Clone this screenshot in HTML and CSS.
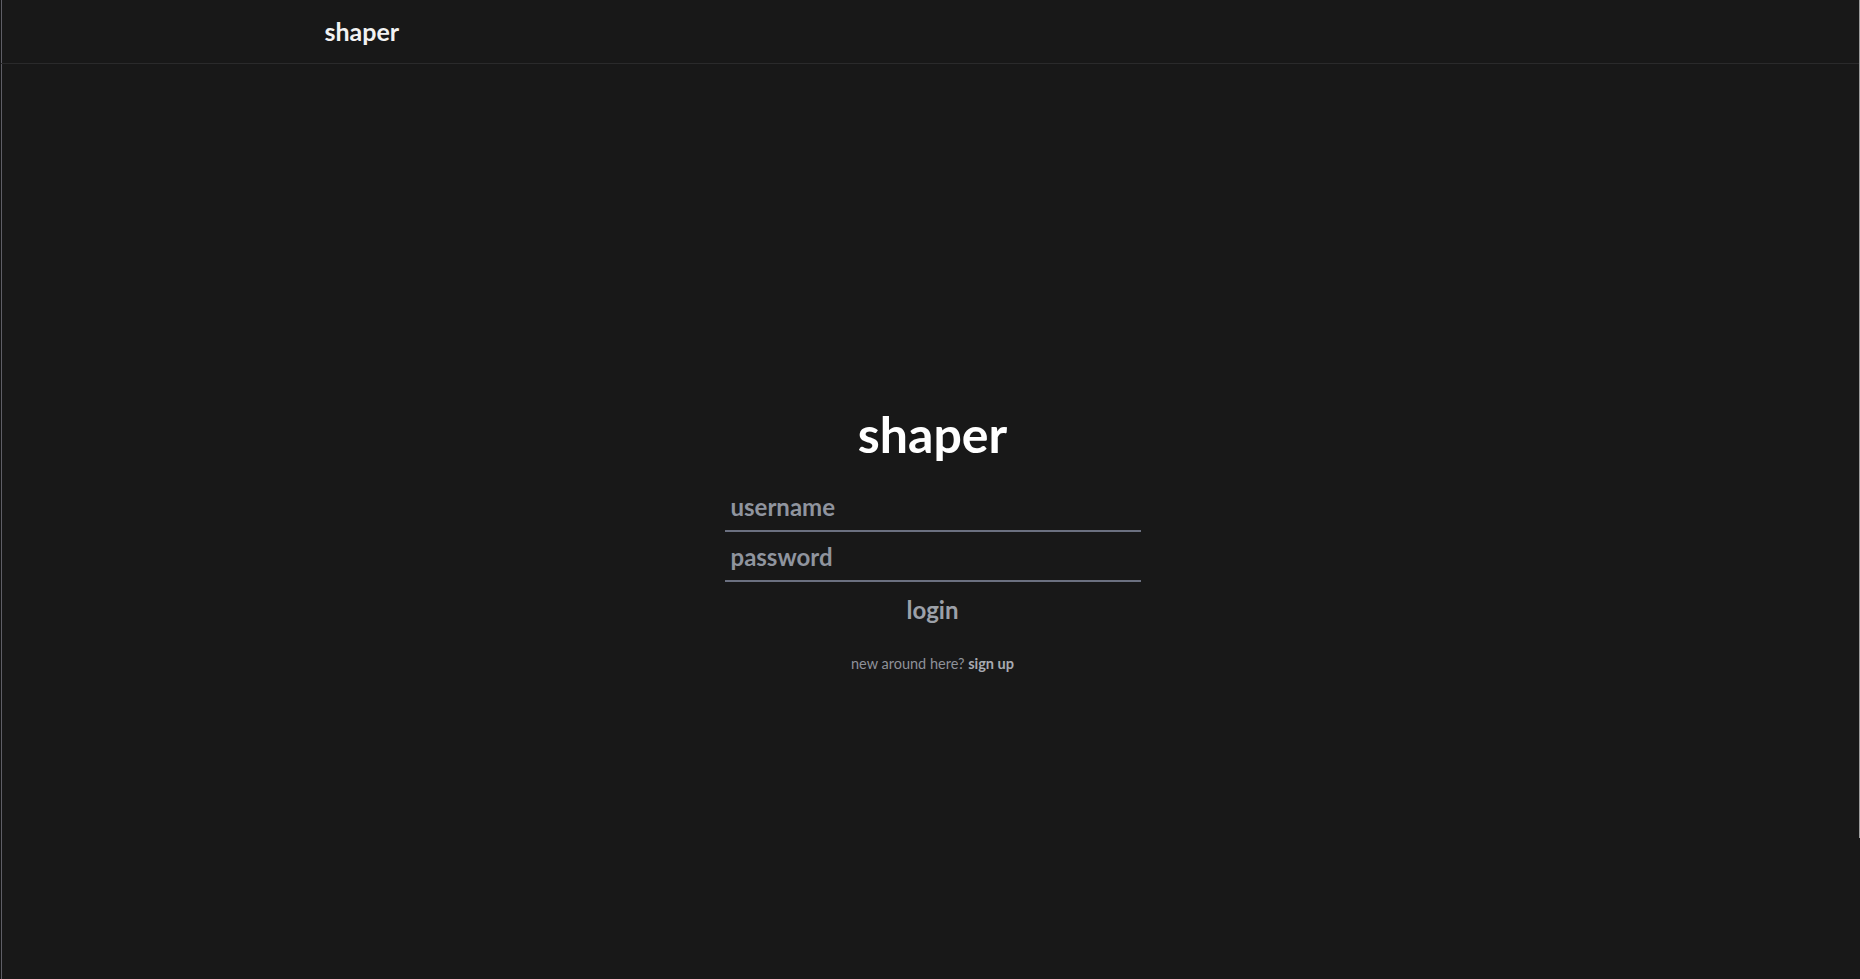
FILE: index.html
```html
<!DOCTYPE html>
<html lang="en">
<head>
<meta charset="utf-8">
<title>shaper</title>
<link rel="stylesheet" href="styles.css">
</head>
<body>
<div class="app">
  <header class="topbar">
    <div class="topbar-inner">
      <a class="brand" href="#">shaper</a>
    </div>
  </header>
  <main class="main">
    <form class="login-form">
      <h1 class="title">shaper</h1>
      <input class="field" type="text" placeholder="username">
      <input class="field" type="password" placeholder="password">
      <button class="login-btn" type="button">login</button>
      <p class="signup">new around here? <a href="#">sign up</a></p>
    </form>
  </main>
  <div class="scroll-thumb"></div>
</div>
</body>
</html>
```
FILE: styles.css
```css
* { box-sizing: border-box; }
html, body {
  margin: 0;
  padding: 0;
  height: 100%;
  background: #181818;
  font-family: Lato, "Open Sans", sans-serif;
  overflow: hidden;
}
.app {
  position: relative;
  height: 100%;
  display: flex;
  flex-direction: column;
  border-left: 1px solid #141414;
  box-shadow: inset 1px 0 0 #5e5e66;
}
.topbar {
  height: 64px;
  flex: none;
  border-bottom: 1px solid #2a2a2b;
  padding-left: 4px;
}
.topbar-inner {
  width: 1216px;
  margin: 0 auto;
  height: 100%;
  display: flex;
  align-items: center;
}
.brand {
  color: #f2f2f2;
  font-weight: 700;
  font-size: 25px;
  text-decoration: none;
  margin-top: -2px;
}
.main {
  flex: 1;
  display: flex;
  justify-content: center;
  padding-left: 4px;
  padding-top: 340px;
}
.login-form {
  width: 416px;
  display: flex;
  flex-direction: column;
  align-items: stretch;
}
.title {
  margin: 0 0 18px;
  text-align: center;
  color: #ffffff;
  font-size: 50px;
  font-weight: 700;
  line-height: 60px;
}
.field {
  display: block;
  width: 100%;
  height: 50px;
  background: transparent;
  border: 0;
  border-bottom: 2px solid #6b7080;
  color: #e5e7eb;
  font-family: inherit;
  font-size: 24px;
  font-weight: 700;
  line-height: 30px;
  padding: 9px 6px;
  outline: none;
}
.field::placeholder {
  color: #8f949e;
  opacity: 1;
}
.login-btn {
  align-self: center;
  margin-top: 10px;
  background: transparent;
  border: 0;
  color: #9ca0a8;
  font-family: inherit;
  font-size: 24px;
  font-weight: 700;
  line-height: 36px;
  padding: 0 8px;
  cursor: pointer;
}
.signup {
  margin: 26px 0 0;
  text-align: center;
  color: #8e9199;
  font-size: 14.5px;
  line-height: 20px;
}
.signup a {
  color: #a7aab1;
  font-weight: 700;
  text-decoration: none;
}
.scroll-thumb {
  position: absolute;
  top: 0;
  right: 0;
  width: 1px;
  height: 838px;
  background: #9e9e9e;
}
```
